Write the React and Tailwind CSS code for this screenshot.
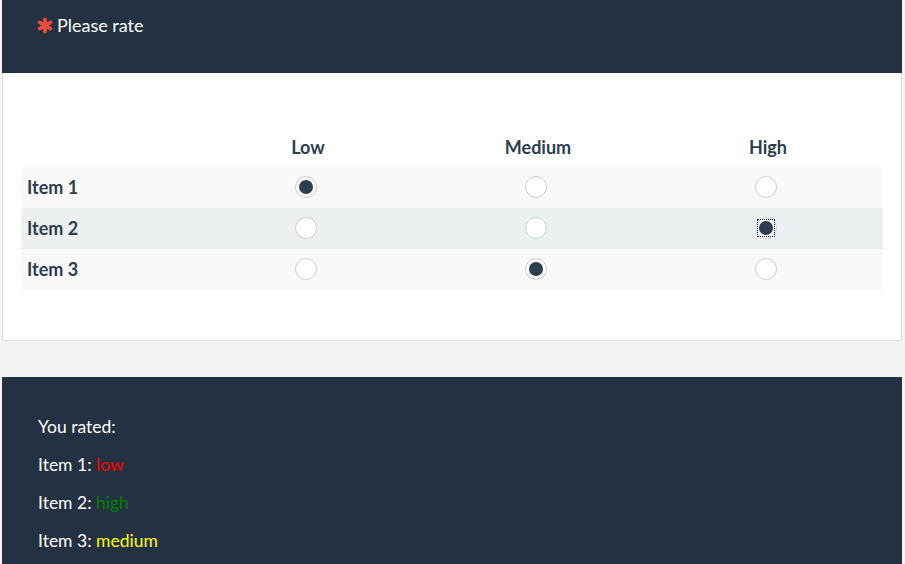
import React from "react";

const columns = ["Low", "Medium", "High"];

const rows = [
  { label: "Item 1", value: 0, bg: "bg-[#f9f9f9]" },
  { label: "Item 2", value: 2, bg: "bg-[#ecf0f1]", focused: true },
  { label: "Item 3", value: 1, bg: "bg-[#f9f9f9]" },
];

function Asterisk() {
  return (
    <svg width="16" height="17" viewBox="0 0 16 16" className="shrink-0">
      <g stroke="#e74c3c" strokeWidth="3.8" strokeLinecap="round">
        <line x1="8" y1="1.8" x2="8" y2="14.2" />
        <line x1="2.6" y1="4.9" x2="13.4" y2="11.1" />
        <line x1="2.6" y1="11.1" x2="13.4" y2="4.9" />
      </g>
    </svg>
  );
}

function Radio({ checked, focused }) {
  return (
    <span className="relative w-[22px] h-[22px] rounded-full bg-white border border-[#cfcfcf] flex items-center justify-center">
      {checked && <span className="w-[14px] h-[14px] rounded-full bg-[#2c3e50]" />}
      {focused && (
        <span className="absolute left-[1px] top-[1px] w-[18px] h-[18px] border border-dotted border-[#1a2633]" />
      )}
    </span>
  );
}

export default function App() {
  return (
    <div className="min-h-[564px] bg-[#f4f4f4] pl-[2px] font-['Lato',sans-serif]">
      <div className="w-[900px]">
        <div className="h-[73px] bg-[#243142] pl-[35px] pt-[13px] flex items-start gap-[4px] text-white text-[18px] leading-[24px]">
          <span className="pt-[4px]">
            <Asterisk />
          </span>
          <span>Please rate</span>
        </div>

        <div className="bg-white border border-t-0 border-[#dddddd] px-[18px] pt-[54px] pb-[50px]">
          <div className="grid grid-cols-[172px_230px_230px_230px] h-[40px] items-center text-[#2c3e50] text-[18px] font-bold">
            <span />
            {columns.map((c) => (
              <span key={c} className="text-center">
                {c}
              </span>
            ))}
          </div>
          {rows.map((r) => (
            <div
              key={r.label}
              className={"grid grid-cols-[172px_230px_230px_230px] h-[41px] items-center " + r.bg}
            >
              <span className="pl-[6px] text-[#2c3e50] text-[18px] font-bold">{r.label}</span>
              {columns.map((c, i) => (
                <span key={c} className="flex justify-center pr-[4px] pb-[2px]">
                  <Radio checked={r.value === i} focused={r.focused && r.value === i} />
                </span>
              ))}
            </div>
          ))}
        </div>

        <div className="h-[36px]" />

        <div className="bg-[#243142] h-[187px] pl-[36px] pt-[31px] text-white text-[17.5px] leading-[38px]">
          <p>You rated:</p>
          <p>
            Item 1: <span className="text-[#ff0000]">low</span>
          </p>
          <p>
            Item 2: <span className="text-[#008000]">high</span>
          </p>
          <p>
            Item 3: <span className="text-[#ffff00]">medium</span>
          </p>
        </div>
      </div>
    </div>
  );
}
